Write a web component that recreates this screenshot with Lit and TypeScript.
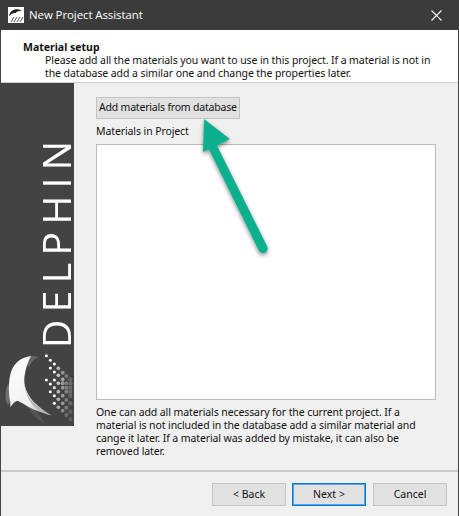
import { LitElement, html, css, svg } from "lit";
import { customElement } from "lit/decorators.js";

const white: [number, number][] = [[136,47],[148,61],[160,72],[148,84],[160,96],[136,120],[148,132],[160,120],[148,155],[160,167],[160,190]];
const gray: [number, number, number, string][] = [
  [172,85,5.5,"#bbb"],[172,106,5.5,"#c4c4c4"],[185,98,6,"#8e8e8e"],[196,108,6,"#777"],[208,118,6.5,"#666"],
  [172,130,5.5,"#c4c4c4"],[185,118,5.5,"#aaa"],[185,130,6,"#999"],[196,130,6,"#7c7c7c"],[208,130,6.5,"#6a6a6a"],
  [172,155,5.5,"#bbb"],[185,143,5.5,"#999"],[196,143,6,"#808080"],[208,143,6.500,"#6a6a6a"],[172,178,5.5,"#b4b4b4"],
  [185,167,5.5,"#999"],[196,155,6,"#808080"],[208,155,6.5,"#6a6a6a"],[160,143,5,"#d4d4d4"],[185,190,5.5,"#999"],
  [196,180,6,"#777"],[208,167,6.5,"#666"],[172,202,5.5,"#aaa"],[196,203,6,"#7c7c7c"],[208,190,6.5,"#666"],
  [208,215,6.5,"#626262"],[208,238,6.5,"#5c5c5c"],[196,225,6,"#6c6c6c"],[185,212,5.5,"#8a8a8a"],
];

@customElement("app-root")
export class AppRoot extends LitElement {
  static styles = css`
    :host {
      display: block;
      position: relative;
      width: 459px;
      height: 516px;
      overflow: hidden;
      font-family: "Noto Sans", Tahoma, sans-serif;
      font-size: 10.5px;
      color: #111;
      background: #f0f0f0;
    }
    .window {
      height: 516px;
      box-sizing: border-box;
      display: flex;
      flex-direction: column;
      border-left: 1px solid #444;
      border-right: 1px solid #444;
    }
    .titlebar {
      height: 30px;
      flex: none;
      box-sizing: border-box;
      margin: 0 -1px;
      padding: 0 0 0 8px;
      background: #3b3b3b;
      color: #fff;
      display: flex;
      align-items: center;
      gap: 5px;
      font-family: "Open Sans", sans-serif;
      font-size: 11.5px;
      letter-spacing: -0.1px;
    }
    .app-icon { width: 16px; height: 16px; background: #fff; flex: none; display: block; }
    .title { flex: 1; padding-bottom: 2px; }
    .close { width: 46px; height: 30px; display: flex; align-items: center; justify-content: center; }
    .header {
      height: 53px;
      flex: none;
      box-sizing: border-box;
      background: #fff;
      border-bottom: 1px solid #d0d0d0;
      padding: 11px 0 0 22px;
      line-height: 13px;
    }
    .header b { display: block; font-weight: 700; }
    .header p { margin: 0 0 0 22px; letter-spacing: -0.09px; }
    .middle { display: flex; flex: none; align-items: flex-start; }
    .sidebar {
      width: 73px;
      height: 343px;
      flex: none;
      background: #434343;
      display: flex;
      flex-direction: column;
      align-items: flex-end;
      position: relative;
    }
    .brand {
      writing-mode: vertical-rl;
      transform: rotate(180deg);
      font-family: "Open Sans", sans-serif;
      font-weight: 400;
      font-size: 39px;
      line-height: 39px;
      letter-spacing: 7.4px;
      color: #fff;
      margin: 57px -1px 0 0;
      height: 208px;
      width: 39px;
      white-space: nowrap;
    }
    .logo { position: absolute; left: 0; bottom: 0; width: 73px; height: 86px; display: block; }
    .content {
      flex: 1;
      padding: 14px 22px 0 22px;
      display: flex;
      flex-direction: column;
      align-items: flex-start;
      line-height: 13px;
      letter-spacing: -0.1px;
    }
    .add {
      width: 144px;
      height: 22px;
      box-sizing: border-box;
      background: #e1e1e1;
      border: 1px solid #c4c4c4;
      display: flex;
      align-items: center;
      padding: 0 0 1px 2px;
      white-space: nowrap;
      letter-spacing: -0.2px;
    }
    .label { margin-top: 6px; height: 13px; line-height: 13px; }
    .list {
      margin-top: 6px;
      width: 100%;
      height: 256px;
      flex: none;
      box-sizing: border-box;
      background: #fff;
      border: 1px solid #b9b9b9;
    }
    .note { margin: 6px 0 0; line-height: 13px; white-space: nowrap; }
    .rule { flex: none; height: 0; border-top: 2px solid #c9c9c9; margin-top: 12px; }
    .footer {
      flex: 1;
      display: flex;
      justify-content: flex-end;
      gap: 6px;
      padding: 11px 11px 0 0;
    }
    .btn {
      width: 74px;
      height: 23px;
      box-sizing: border-box;
      background: #e1e1e1;
      border: 1px solid #c4c4c4;
      display: flex;
      align-items: center;
      justify-content: center;
      padding-bottom: 1px;
    }
    .btn.primary { border-color: #0078d7; box-shadow: inset 0 0 0 1px #5aa5e0; margin-right: 1px; }
    .arrow { position: absolute; left: 190px; top: 110px; width: 100px; height: 150px; display: block; overflow: visible; }
  `;

  render() {
    return html`
      <div class="window">
        <div class="titlebar">
          <svg class="app-icon" viewBox="0 0 16 16">
            <path d="M1 9C2 4 6 1.5 11 2.5L15 4.5C11 3.5 9 4.5 7.5 6C5 5.5 3 7 1 9Z" fill="#222"/>
            <path d="M3 15L6 10M6 15L9 10M9 15L12 10M12 15L15 10" stroke="#555" stroke-width="1" fill="none"/>
          </svg>
          <span class="title">New Project Assistant</span>
          <div class="close">
            <svg width="11" height="11" viewBox="0 0 11 11"><path d="M.5.5L10.5 10.5M10.5.5L.5 10.5" stroke="#fff" stroke-width="1.1" fill="none"/></svg>
          </div>
        </div>
        <div class="header">
          <b>Material setup</b>
          <p>Please add all the materials you want to use in this project. If a material is not in<br>the database add a similar one and change the properties later.</p>
        </div>
        <div class="middle">
          <div class="sidebar">
            <div class="brand">DELPHIN</div>
            <svg class="logo" viewBox="0 0 219 258">
              <defs>
                <linearGradient id="cres" x1="0.3" y1="0.2" x2="0.9" y2="1">
                  <stop offset="0" stop-color="#fafafa"/><stop offset="0.6" stop-color="#f0f0f0"/><stop offset="1" stop-color="#9a9a9a"/>
                </linearGradient>
              </defs>
              <path d="M22 130C12 150 10 175 20 195L34 180Z" fill="#707070"/>
              <path d="M70 55C85 46 100 46 114 52C100 56 90 66 84 82Z" fill="#666"/>
              <path d="M72 192C92 222 112 242 132 252C120 226 100 208 78 190Z" fill="#555"/>
              <path d="M90 48C62 52 40 66 30 96C22 122 22 160 28 186L28 202C34 192 42 184 50 182C70 192 92 208 118 216C130 220 142 224 152 226C130 212 108 198 90 176C72 152 66 128 72 100C76 78 84 60 90 48Z" fill="url(#cres)"/>
              <path d="M70 132C74 156 86 178 106 196C120 208 138 220 152 226C132 222 110 210 94 194C80 176 72 154 70 132Z" fill="#b4b4b4"/>
              ${gray.map(([x, y, r, c]) => svg`<circle cx=${x} cy=${y} r=${r} fill=${c}/>`)}
              ${white.map(([x, y]) => svg`<circle cx=${x} cy=${y} r="4.6" fill="#fff"/>`)}
            </svg>
          </div>
          <div class="content">
            <div class="add">Add materials from database</div>
            <div class="label">Materials in Project</div>
            <div class="list"></div>
            <p class="note">One can add all materials necessary for the current project. If a<br>material is not included in the database add a similar material and<br>cange it later. If a material was added by mistake, it can also be<br>removed later.</p>
          </div>
        </div>
        <div class="rule"></div>
        <div class="footer">
          <div class="btn">&lt; Back</div>
          <div class="btn primary">Next &gt;</div>
          <div class="btn">Cancel</div>
        </div>
      </div>
      <svg class="arrow" viewBox="0 0 100 150">
        <defs><filter id="s" x="-30%" y="-30%" width="160%" height="160%"><feDropShadow dx="0" dy="2" stdDeviation="2" flood-color="#000" flood-opacity="0.45"/></filter></defs>
        <path d="M14 9L40 29L27 35.5L77 136A4.5 4.5 0 0 1 69 141L19 39.500L13 42Z" fill="#10b08e" filter="url(#s)"/>
      </svg>
    `;
  }
}
